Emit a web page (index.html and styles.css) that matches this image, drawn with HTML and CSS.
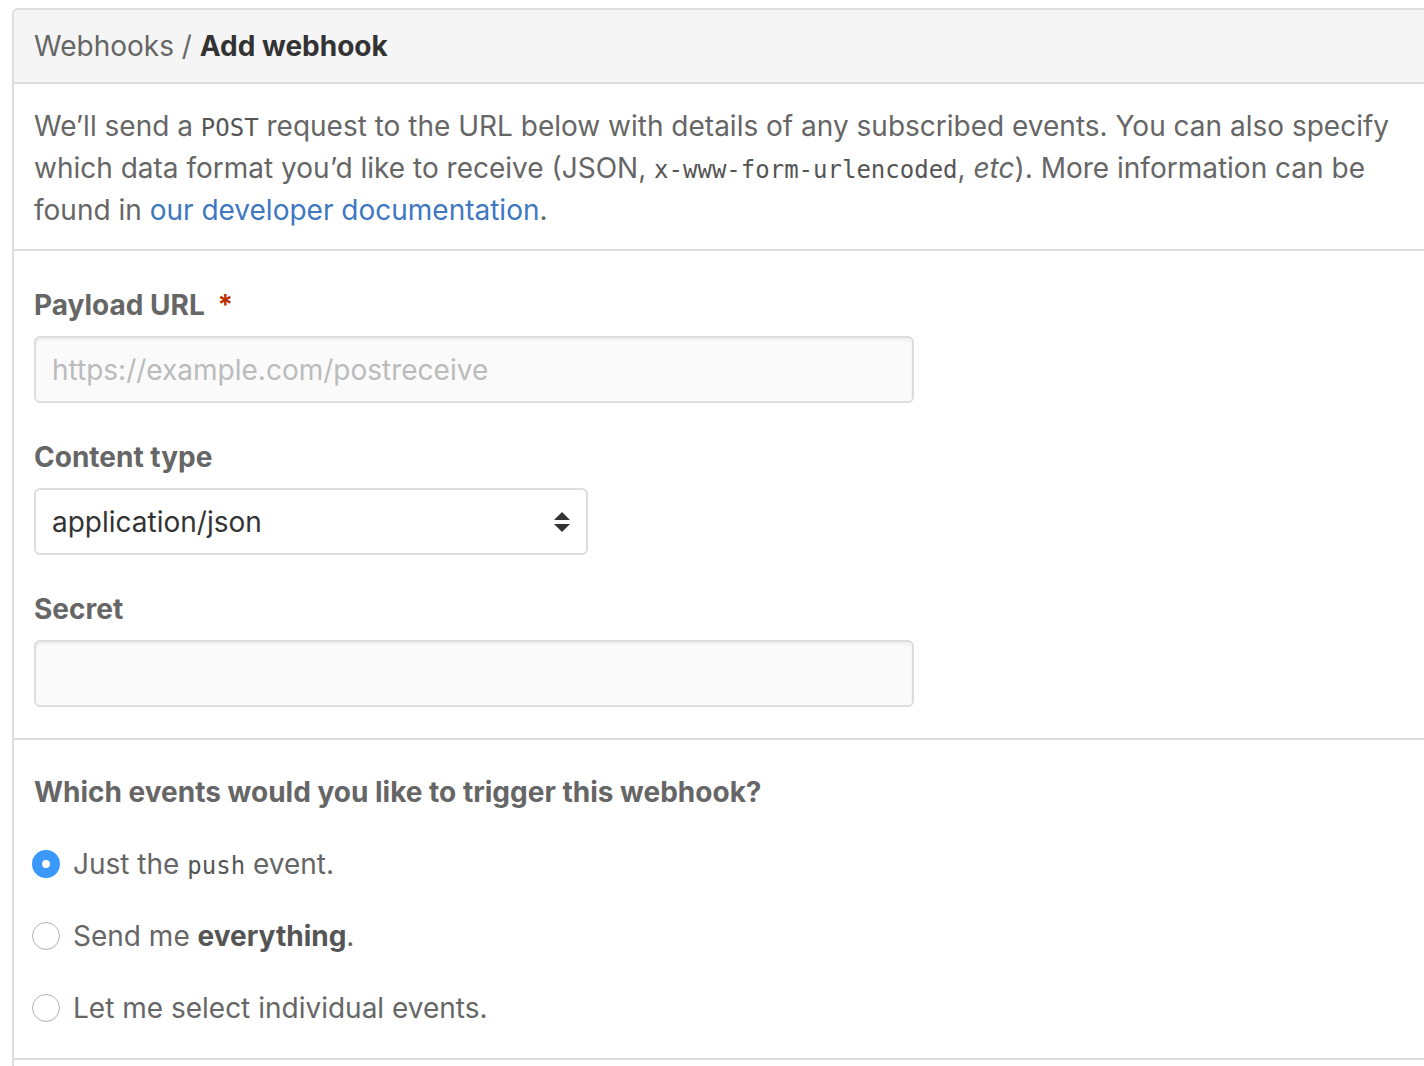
FILE: index.html
```html
<!DOCTYPE html>
<html lang="en">
<head>
<meta charset="utf-8">
<title>Add webhook</title>
<link rel="stylesheet" href="styles.css">
</head>
<body>
<div class="panel">
  <div class="panel-header">
    <span class="crumb">Webhooks</span> / <strong class="crumb-current">Add webhook</strong>
  </div>
  <div class="panel-section intro">
    <p>We’ll send a <code>POST</code> request to the URL below with details of any subscribed events. You can also specify which data format you’d like to receive (JSON, <code>x-www-form-urlencoded</code>, <em>etc</em>). More information can be found in <a href="#">our developer documentation</a>.</p>
  </div>
  <div class="panel-section form">
    <div class="form-group">
      <label class="label">Payload URL <span class="required">*</span></label>
      <div class="input wide placeholder">https://example.com/postreceive</div>
    </div>
    <div class="form-group">
      <label class="label">Content type</label>
      <div class="input select">
        <span>application/json</span>
        <svg class="select-arrow" width="16" height="20" viewBox="0 0 16 20"><path d="M8 0 L16 8 L0 8 Z M0 12 L16 12 L8 20 Z" fill="#333"/></svg>
      </div>
    </div>
    <div class="form-group">
      <label class="label">Secret</label>
      <div class="input wide"></div>
    </div>
  </div>
  <div class="panel-section events">
    <h3 class="label">Which events would you like to trigger this webhook?</h3>
    <div class="radio-row"><span class="radio checked"></span><span>Just the <code>push</code> event.</span></div>
    <div class="radio-row"><span class="radio"></span><span>Send me <strong>everything</strong>.</span></div>
    <div class="radio-row"><span class="radio"></span><span>Let me select individual events.</span></div>
  </div>
  <div class="panel-section tail"></div>
</div>
</body>
</html>
```

FILE: styles.css
```css
html, body {
  margin: 0;
  padding: 0;
  background: #fff;
  overflow: hidden;
}
body {
  padding: 8px 0 0 12px;
  font-family: "Inter", "Liberation Sans", sans-serif;
  font-size: 28px;
  color: #666;
}
.panel {
  width: 1440px;
  border: 2px solid #ddd;
  border-radius: 6px 0 0 0;
}
.panel-header {
  background: #f5f5f5;
  height: 72px;
  border-bottom: 2px solid #ddd;
  border-radius: 6px 0 0 0;
  display: flex;
  align-items: center;
  padding-left: 20px;
  font-size: 28px;
  color: #666;
  white-space: pre;
}
.crumb-current {
  color: #333;
  font-weight: 700;
}
.panel-section {
  border-bottom: 2px solid #ddd;
  padding: 0 20px;
}
.intro {
  padding-top: 21px;
  padding-bottom: 18px;
}
.intro p {
  margin: 0;
  width: 1380px;
  line-height: 42px;
}
code {
  font-family: "DejaVu Sans Mono", monospace;
  font-size: 24px;
  line-height: 0;
  color: #555;
}
a {
  color: #4078c0;
  text-decoration: none;
}
.form {
  padding-top: 33px;
  padding-bottom: 31px;
}
.form-group + .form-group {
  margin-top: 33px;
}
.label {
  display: block;
  margin: 0 0 10px;
  font-size: 28px;
  line-height: 42px;
  font-weight: 700;
  color: #666;
}
.required {
  color: #bd2c00;
  margin-left: 6px;
}
.input {
  box-sizing: border-box;
  height: 67px;
  border: 2px solid #ddd;
  border-radius: 6px;
  background: #fafafa;
  box-shadow: inset 0 2px 3px rgba(0,0,0,0.05);
  display: flex;
  align-items: center;
  padding: 0 16px;
  color: #333;
}
.wide {
  width: 880px;
}
.placeholder {
  color: #bbb;
}
.select {
  width: 554px;
  background: #fff;
  box-shadow: none;
  justify-content: space-between;
  color: #333;
}
.events {
  padding-top: 31px;
  padding-bottom: 14px;
}
.events .label {
  margin-bottom: 15px;
}
.radio-row {
  height: 72px;
  display: flex;
  align-items: center;
  gap: 13px;
  margin-left: -2px;
  color: #666;
}
.radio-row strong {
  color: #555;
}
.radio {
  box-sizing: border-box;
  width: 28px;
  height: 28px;
  border-radius: 50%;
  border: 1.5px solid #b5b5b5;
  background: #fff;
  box-shadow: inset 0 -1px 1px rgba(0,0,0,0.06);
  flex: none;
}
.radio.checked {
  border: 10px solid #3b99fc;
  background: #fff;
  box-shadow: none;
}
.tail {
  height: 40px;
  border-bottom: none;
}
```
